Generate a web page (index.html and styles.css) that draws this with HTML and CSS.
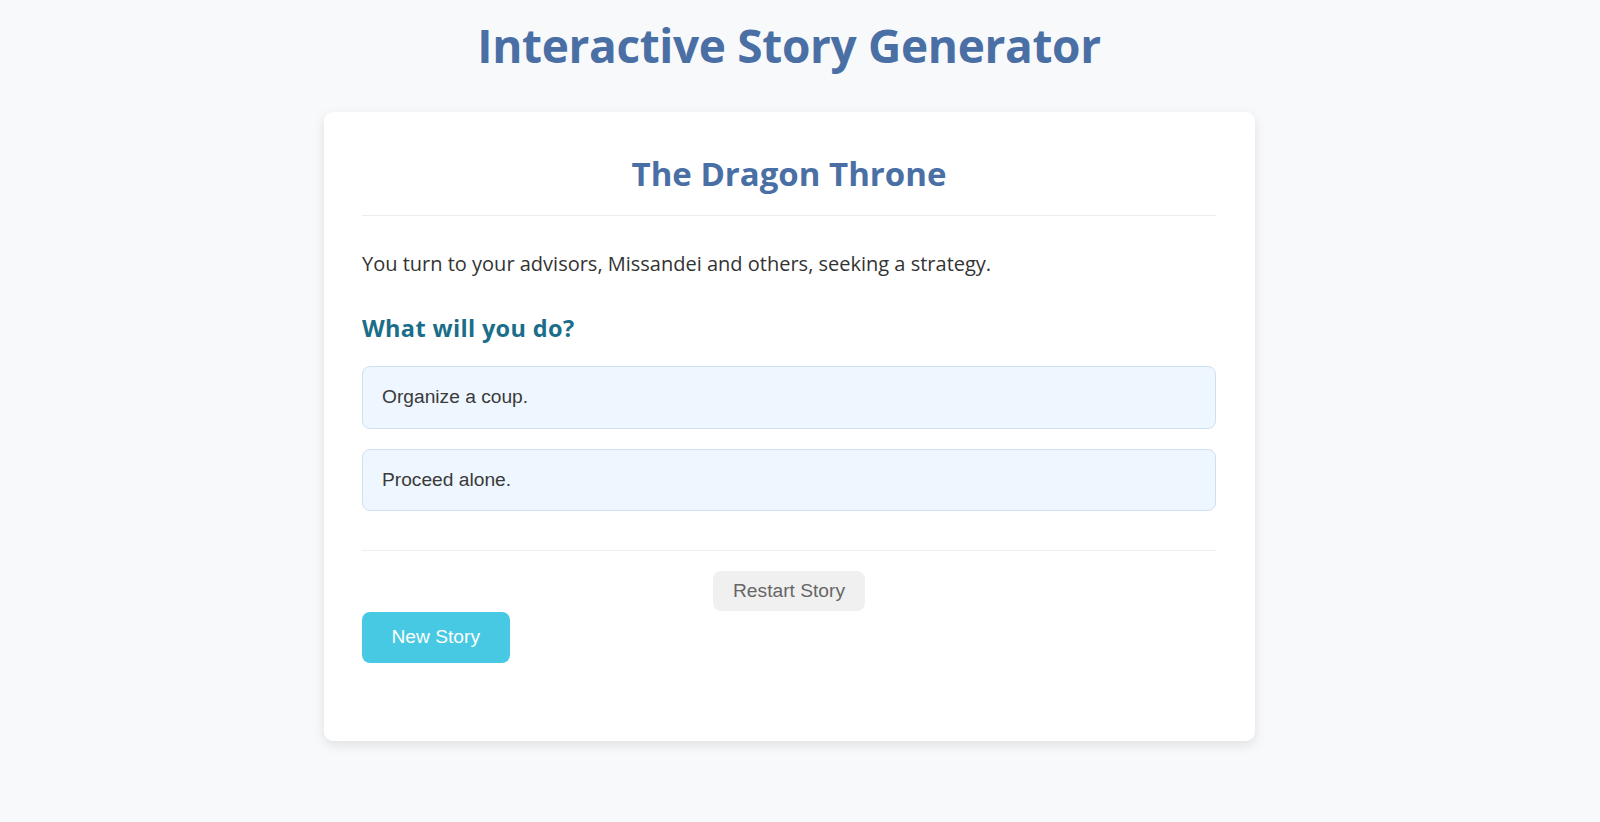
FILE: index.html
```html
<!DOCTYPE html>
<html lang="en">
<head>
<meta charset="utf-8">
<title>Interactive Story Generator</title>
<link rel="stylesheet" href="styles.css">
</head>
<body>
  <div class="page">
    <h1 class="app-title">Interactive Story Generator</h1>
    <main class="card">
      <h2 class="story-title">The Dragon Throne</h2>
      <p class="story-text">You turn to your advisors, Missandei and others, seeking a strategy.</p>
      <h3 class="prompt">What will you do?</h3>
      <div class="choices">
        <button class="choice">Organize a coup.</button>
        <button class="choice">Proceed alone.</button>
      </div>
      <div class="controls">
        <button class="btn-restart">Restart Story</button>
      </div>
      <button class="btn-new">New Story</button>
    </main>
  </div>
</body>
</html>
```
FILE: styles.css
```css
html, body {
  margin: 0;
  padding: 0;
}

body {
  background: #f8f9fa;
  font-family: "Open Sans", "Noto Sans", sans-serif;
  color: #333;
}

.page {
  padding: 0 22px 81px 0;
}

.app-title {
  margin: 0;
  padding-top: 15px;
  height: 111.7px;
  box-sizing: border-box;
  text-align: center;
  font-size: 46px;
  line-height: 60px;
  font-weight: 700;
  color: #4a6fa5;
  letter-spacing: -0.35px;
}

.card {
  display: block;
  width: 931px;
  box-sizing: border-box;
  margin: 0 auto;
  background: #fff;
  border-radius: 9px;
  box-shadow: 0 4px 12px rgba(0, 0, 0, 0.1);
  padding: 42.5px 38.5px 40px;
}

.story-title {
  margin: 0;
  padding-bottom: 21px;
  border-bottom: 1px solid #ececec;
  text-align: center;
  font-size: 33px;
  line-height: 40px;
  font-weight: 700;
  color: #4a6fa5;
}

.story-text {
  margin: 32px 0 0;
  font-size: 20px;
  line-height: 32px;
  color: #333;
}

.prompt {
  margin: 32.4px 0 0;
  font-size: 23.5px;
  line-height: 30px;
  font-weight: 700;
  color: #1a6e8a;
  letter-spacing: 0.35px;
}

.choices {
  display: flex;
  flex-direction: column;
  gap: 20px;
  margin-top: 23.3px;
}

.choice {
  display: block;
  width: 100%;
  text-align: left;
  font-family: "Liberation Sans", Arial, sans-serif;
  font-size: 19.2px;
  line-height: 20.7px;
  color: #3a3a3a;
  background: #eef6ff;
  border: 1px solid #cfe0f1;
  border-radius: 8px;
  padding: 20px 19px;
  cursor: pointer;
}

.controls {
  margin-top: 39px;
  padding-top: 19.5px;
  border-top: 1px solid #eeeeee;
  display: flex;
  justify-content: center;
}

.btn-restart {
  font-family: "Liberation Sans", Arial, sans-serif;
  font-size: 19.2px;
  line-height: 20.7px;
  color: #666;
  background: #f0f0f0;
  border: none;
  border-radius: 8px;
  padding: 10px 20px;
  cursor: pointer;
}

.btn-new {
  display: block;
  margin-top: 1px;
  margin-bottom: 37.7px;
  font-family: "Liberation Sans", Arial, sans-serif;
  font-size: 19.2px;
  line-height: 20.7px;
  color: #fff;
  background: #48c9e3;
  border: none;
  border-radius: 8px;
  padding: 15px 29.5px;
  cursor: pointer;
}
```
